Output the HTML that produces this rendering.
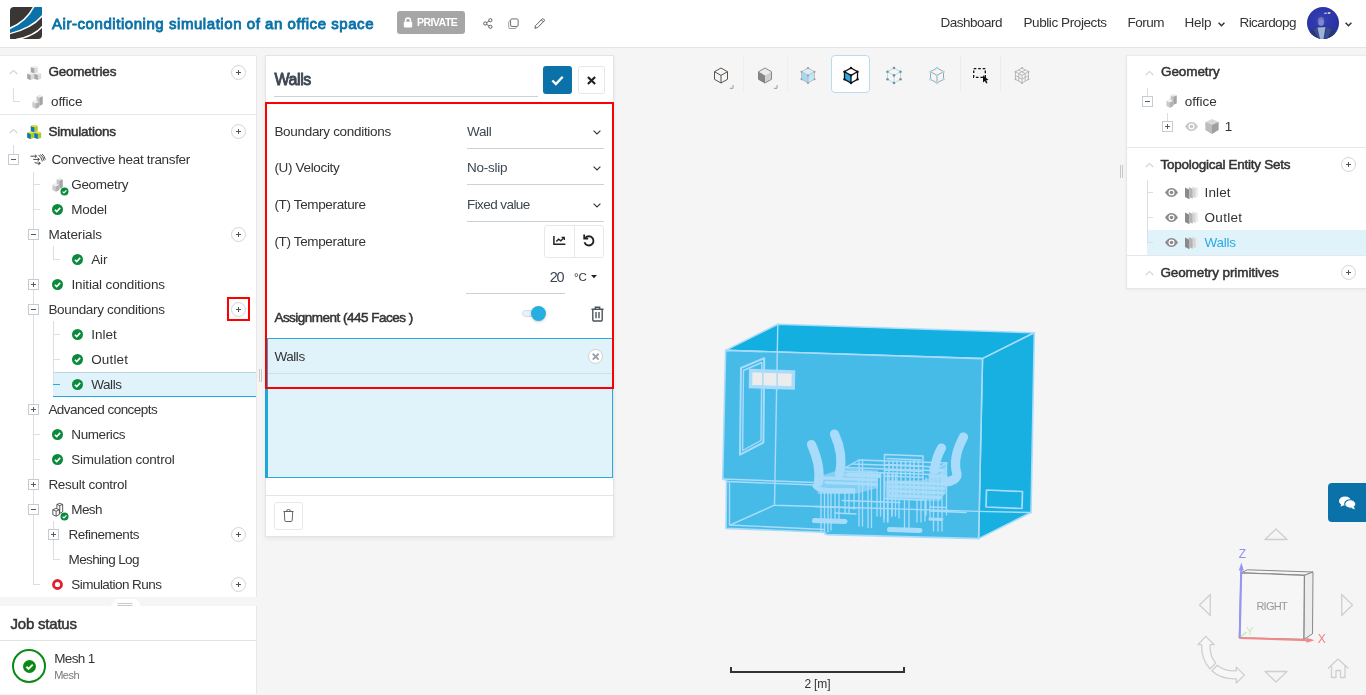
<!DOCTYPE html>
<html><head><meta charset="utf-8"><title>Air-conditioning simulation of an office space</title>
<style>
*{box-sizing:border-box;margin:0;padding:0}
html,body{width:1366px;height:695px;overflow:hidden;background:#f5f5f5;font-family:"Liberation Sans",sans-serif;color:#333;font-size:14px}
.a{position:absolute}
.t{position:absolute;white-space:nowrap;line-height:20px;height:20px}
.m{-webkit-text-stroke:0.5px currentColor}
.h{-webkit-text-stroke:0.85px currentColor}
.b{font-weight:bold}
svg{position:absolute;overflow:visible}
.pl{position:absolute;width:15px;height:15px;border:1px solid #cfd6dc;border-radius:50%;background:#fff}
.pl:before{content:"";position:absolute;left:4px;top:6px;width:5px;height:1px;background:#555}
.pl:after{content:"";position:absolute;left:6px;top:4px;width:1px;height:5px;background:#555}
.bx{position:absolute;width:11px;height:11px;border:1px solid #c3ccd4;background:#fff}
.bx:before{content:"";position:absolute;left:2px;top:4px;width:5px;height:1px;background:#5a5a5a}
.bx.p:after{content:"";position:absolute;left:4px;top:2px;width:1px;height:5px;background:#5a5a5a}
.ln{position:absolute;background:#d9dfe4}
.ck{position:absolute;width:11px;height:11px}
.sep{position:absolute;height:1px;background:#e3e8ec}
.ul{position:absolute;height:1px;background:#c9d2da}
</style></head><body>
<!-- ===== HEADER ===== -->
<div class="a" style="left:0;top:0;width:1366px;height:48px;background:#fff;border-bottom:1px solid #e4e4e4"></div>
<svg style="left:10px;top:7px" width="32" height="32" viewBox="0 0 32 32">
 <defs><clipPath id="lg"><path d="M4 0H31.300A.7.700 0 0 1 32 .7V28A4 4 0 0 1 28 32H.7A.7.700 0 0 1 0 31.300V4A4 4 0 0 1 4 0Z"/></clipPath></defs>
 <g clip-path="url(#lg)">
  <rect width="32" height="32" fill="#3a3634"/>
  <path d="M-1 20.600Q16 14 23.200 -1L33 -1L33 9Q22.500 22 -1 27.500Z" fill="#fff"/>
  <path d="M-1 22.600Q17 15.500 25 -1L33 -1L33 6.800Q22 20.500 -1 26.200Z" fill="#0a72a8"/>
  <path d="M6 32.600Q24 29.500 32.600 19.300" fill="none" stroke="#fff" stroke-width="1.500"/>
 </g>
</svg>
<div class="a" style="left:397px;top:11px;width:68px;height:23px;background:#a6a6a6;border-radius:3px"></div>
<svg style="left:403px;top:17px" width="10" height="11" viewBox="0 0 10 11"><path d="M2.6 5V3.4a2.4 2.4 0 0 1 4.8 0V5" fill="none" stroke="#fff" stroke-width="1.5"/><rect x="0.8" y="4.8" width="8.4" height="5.6" rx="0.8" fill="#fff"/></svg>
<!-- share -->
<svg style="left:482.800px;top:18.400px" width="10.200" height="11" viewBox="0 0 12 13" fill="none" stroke="#555" stroke-width="1.100"><circle cx="8.7" cy="2.6" r="1.9"/><circle cx="2.6" cy="6.5" r="1.9"/><circle cx="8.7" cy="10.4" r="1.9"/><path d="M4.3 5.5L7 3.6M4.3 7.5L7 9.4"/></svg>
<!-- copy -->
<svg style="left:508px;top:18.200px" width="11.200" height="11.600" viewBox="0 0 13 13" fill="none" stroke="#666" stroke-width="1.100"><rect x="3" y="0.8" width="8.8" height="8.8" rx="1.6" fill="#fff"/><path d="M2.6 3.2H2.2A1.4 1.4 0 0 0 .8 4.6v6a1.4 1.4 0 0 0 1.4 1.4h6a1.4 1.4 0 0 0 1.4-1.4v-.6" stroke="#999"/></svg>
<!-- pencil -->
<svg style="left:533.900px;top:18.200px" width="11.200" height="11.200" viewBox="0 0 13 13" fill="none" stroke="#555" stroke-width="1.100"><path d="M1 12l.9-3.2L9.6 1.1a1 1 0 0 1 1.4 0l.9.9a1 1 0 0 1 0 1.4L4.2 11.1Z"/><path d="M8.6 2.2l2.2 2.2"/></svg>
<!-- help chevron -->
<svg style="left:1217.500px;top:21.500px" width="7" height="5" viewBox="0 0 7 5" fill="none" stroke="#333" stroke-width="1.500"><path d="M.6.800l2.900 2.900L6.400.8"/></svg>
<svg style="left:1345px;top:21.500px" width="7" height="5" viewBox="0 0 7 5" fill="none" stroke="#333" stroke-width="1.500"><path d="M.6.800l2.900 2.900L6.400.8"/></svg>
<!-- avatar -->
<svg style="left:1307px;top:7px" width="32" height="32" viewBox="0 0 32 32">
 <defs><clipPath id="av"><circle cx="16" cy="16" r="16"/></clipPath>
 <radialGradient id="avg" cx="45%" cy="40%" r="70%"><stop offset="0" stop-color="#3541b8"/><stop offset="1" stop-color="#262d9a"/></radialGradient></defs>
 <g clip-path="url(#av)"><rect width="32" height="32" fill="url(#avg)"/>
 <path d="M1 32C2 24 6 21.500 11 19.500L19 19C25 21 29 24 31 32Z" fill="#2a3878"/>
 <path d="M10.500 20L15 32H12L6.500 23Z" fill="#3a4a94"/><path d="M19.500 19.500L17 32H20L24.500 22.500Z" fill="#3a4a94"/>
 <path d="M10.500 20.500L13 32H16.500L18.500 20Z" fill="#9db4d6"/>
 <ellipse cx="14" cy="12.500" rx="3.800" ry="4.200" fill="#3a3f9c"/>
 <ellipse cx="14" cy="14.500" rx="3.300" ry="4.600" fill="#6a73c4"/>
 <ellipse cx="14.200" cy="15.500" rx="2.300" ry="3" fill="#8088cf"/>
 <ellipse cx="22" cy="6" rx="1.500" ry="1" fill="#e8d9a0"/><ellipse cx="18.500" cy="6.300" rx="1.600" ry=".7" fill="#b9c2ee"/>
 </g>
</svg>
<!-- ===== LEFT TREE PANEL ===== -->
<div class="a" style="left:0;top:55px;width:257px;height:542px;background:#fff;border-top:1px solid #ececec;border-right:1px solid #e8e8e8"></div>
<div class="sep" style="left:0;top:114px;width:256px"></div>
<!-- selected row -->
<div class="a" style="left:53px;top:372px;width:203px;height:25px;background:#e1f3fa;border-top:1px solid #bcd6e6;border-bottom:1px solid #1ea9e0"></div>
<!-- tree lines -->
<div class="ln" style="left:13px;top:88px;width:1px;height:14px"></div><div class="ln" style="left:13px;top:101px;width:7px;height:1px"></div>
<div class="ln" style="left:13px;top:145px;width:1px;height:9px"></div>
<div class="ln" style="left:33px;top:172px;width:1px;height:413px"></div>
<div class="ln" style="left:33px;top:184px;width:7px;height:1px"></div>
<div class="ln" style="left:33px;top:209px;width:7px;height:1px"></div>
<div class="ln" style="left:53px;top:246px;width:1px;height:14px"></div><div class="ln" style="left:53px;top:259px;width:7px;height:1px"></div>
<div class="ln" style="left:53px;top:321px;width:1px;height:64px"></div>
<div class="ln" style="left:53px;top:334px;width:7px;height:1px"></div>
<div class="ln" style="left:53px;top:359px;width:7px;height:1px"></div>
<div class="ln" style="left:53px;top:384px;width:7px;height:1px;background:#29abe2"></div>
<div class="ln" style="left:33px;top:434px;width:7px;height:1px"></div>
<div class="ln" style="left:33px;top:459px;width:7px;height:1px"></div>
<div class="ln" style="left:53px;top:521px;width:1px;height:39px"></div><div class="ln" style="left:53px;top:559px;width:7px;height:1px"></div>
<div class="ln" style="left:33px;top:584px;width:7px;height:1px"></div>
<!-- collapse chevrons -->
<svg style="left:9px;top:69px" width="9" height="6" viewBox="0 0 9 6" fill="none" stroke="#cdd3d9" stroke-width="1.1"><path d="M.8 5l3.7-3.6L8.2 5"/></svg>
<svg style="left:9px;top:128px" width="9" height="6" viewBox="0 0 9 6" fill="none" stroke="#cdd3d9" stroke-width="1.1"><path d="M.8 5l3.7-3.6L8.2 5"/></svg>
<!-- plus circles -->
<div class="pl" style="left:231px;top:64.5px"></div>
<div class="pl" style="left:231px;top:123.5px"></div>
<div class="pl" style="left:231px;top:226.5px"></div>
<div class="pl" style="left:231px;top:301.5px"></div>
<div class="pl" style="left:231px;top:526.5px"></div>
<div class="pl" style="left:231px;top:576.5px"></div>
<div class="a" style="left:227px;top:297px;width:23px;height:24px;border:2px solid #f00"></div>
<!-- expand boxes -->
<div class="bx" style="left:8px;top:154px"></div>
<div class="bx" style="left:28px;top:229px"></div>
<div class="bx p" style="left:28px;top:279px"></div>
<div class="bx" style="left:28px;top:304px"></div>
<div class="bx p" style="left:28px;top:404px"></div>
<div class="bx p" style="left:28px;top:479px"></div>
<div class="bx" style="left:28px;top:504px"></div>
<div class="bx p" style="left:48px;top:529px"></div>
<!-- icon defs -->
<svg width="0" height="0"><defs>
 <g id="ck"><circle cx="5.5" cy="5.5" r="5.5" fill="#0b8a3c"/><path d="M2.9 5.7l1.8 1.8 3.5-3.6" fill="none" stroke="#fff" stroke-width="1.6"/></g>
 <g id="blk"><path d="M4.600 1.500L7.600.3l3 1.200v7.800l-3 1.500-3-1.200Z" fill="#c4c4c4"/><path d="M4.600 1.500L7.600.3l3 1.200-3 1.200Z" fill="#ececec"/><path d="M7.600 2.700l3-1.200v7.800l-3 1.500Z" fill="#a4a4a4"/><path d="M.4 6.900l3.200-1.300 3.600 1.400v4.900l-3.400 1.800-3.400-1.600Z" fill="#cbcbcb"/><path d="M.4 6.900l3.200-1.300 3.600 1.400-3.400 1.500Z" fill="#f0f0f0"/><path d="M3.800 8.500l3.400-1.500v4.900l-3.400 1.800Z" fill="#b2b2b2"/></g>
</defs></svg>
<!-- Geometries icon: 3 gray cubes -->
<svg style="left:27.2px;top:65.800px" width="15" height="15" viewBox="0 0 15 15"><path d="M7.27 0.00l3.45 1.1v5.1l-3.45 1.1l-3.45 -1.1v-5.1Z" fill="#dadada"/><path d="M7.27 2.20v5.1l-3.45 -1.1v-5.1Z" fill="#a6a6a6"/><path d="M7.27 0.00l3.45 1.1l-3.45 1.1l-3.45 -1.1Z" fill="#f0f0f0"/><path d="M3.7 6.60l3.45 1.1v5.1l-3.45 1.1l-3.45 -1.1v-5.1Z" fill="#dadada"/><path d="M3.7 8.80v5.1l-3.45 -1.1v-5.1Z" fill="#a6a6a6"/><path d="M3.7 6.60l3.45 1.1l-3.45 1.1l-3.45 -1.1Z" fill="#f0f0f0"/><path d="M10.75 6.60l3.45 1.1v5.1l-3.45 1.1l-3.45 -1.1v-5.1Z" fill="#dadada"/><path d="M10.75 8.80v5.1l-3.45 -1.1v-5.1Z" fill="#a6a6a6"/><path d="M10.75 6.60l3.45 1.1l-3.45 1.1l-3.45 -1.1Z" fill="#f0f0f0"/></svg>
<!-- office icon -->
<svg style="left:31.700px;top:94.500px" width="11" height="14" viewBox="0 0 11 14"><use href="#blk"/></svg>
<!-- Simulations icon: coloured cubes -->
<svg style="left:27.2px;top:124.800px" width="15" height="15" viewBox="0 0 15 15"><path d="M7.27 0.00l3.45 1.1v5.1l-3.45 1.1l-3.45 -1.1v-5.1Z" fill="#a9c93a"/><path d="M7.27 2.20v5.1l-3.45 -1.1v-5.1Z" fill="#0b79b9"/><path d="M7.27 0.00l3.45 1.1l-3.45 1.1l-3.45 -1.1Z" fill="#efe023"/><path d="M3.7 6.60l3.45 1.1v5.1l-3.45 1.1l-3.45 -1.1v-5.1Z" fill="#a9c93a"/><path d="M3.7 8.80v5.1l-3.45 -1.1v-5.1Z" fill="#0b79b9"/><path d="M3.7 6.60l3.45 1.1l-3.45 1.1l-3.45 -1.1Z" fill="#efe023"/><path d="M10.75 6.60l3.45 1.1v5.1l-3.45 1.1l-3.45 -1.1v-5.1Z" fill="#a9c93a"/><path d="M10.75 8.80v5.1l-3.45 -1.1v-5.1Z" fill="#0b79b9"/><path d="M10.75 6.60l3.45 1.1l-3.45 1.1l-3.45 -1.1Z" fill="#efe023"/></svg>
<!-- convective icon -->
<svg style="left:29.800px;top:153.900px" width="16" height="12" viewBox="0 0 16 12" fill="none" stroke="#4a4a4a" stroke-width="1"><path d="M.5 2.200h6M4.900.7l1.800 1.500-1.800 1.500"/><path d="M3.200 5.400h6M7.600 3.900l1.800 1.500-1.800 1.500"/><path d="M4.600 8.700l5.600.8M8.600 7.700l1.700 1.800-2 1.200"/><path d="M8.600.9q3 2.600 3.800 6.500M10.400.4q3 2.600 3.700 6.300M12.200 0q2.500 2.400 3.100 5.600"/></svg>
<!-- Geometry (sim) icon -->
<svg style="left:52px;top:177.800px" width="11" height="14" viewBox="0 0 11 14"><use href="#blk"/></svg>
<svg style="left:60px;top:187px" width="9" height="9" viewBox="-0.700 -0.700 12.400 12.400"><circle cx="5.5" cy="5.5" r="6.200" fill="#fff"/><use href="#ck"/></svg>
<!-- checks -->
<svg class="ck" style="left:52px;top:204px" viewBox="0 0 11 11"><use href="#ck"/></svg>
<svg class="ck" style="left:72px;top:254px" viewBox="0 0 11 11"><use href="#ck"/></svg>
<svg class="ck" style="left:52px;top:279px" viewBox="0 0 11 11"><use href="#ck"/></svg>
<svg class="ck" style="left:72px;top:329px" viewBox="0 0 11 11"><use href="#ck"/></svg>
<svg class="ck" style="left:72px;top:354px" viewBox="0 0 11 11"><use href="#ck"/></svg>
<svg class="ck" style="left:72px;top:379px" viewBox="0 0 11 11"><use href="#ck"/></svg>
<svg class="ck" style="left:52px;top:429px" viewBox="0 0 11 11"><use href="#ck"/></svg>
<svg class="ck" style="left:52px;top:454px" viewBox="0 0 11 11"><use href="#ck"/></svg>
<!-- mesh icon -->
<svg style="left:51.800px;top:503.400px" width="11.500" height="13" viewBox="0 0 11 13.500" fill="none" stroke="#444" stroke-width="0.9" stroke-linejoin="round"><path d="M4.600 1.500L7.600.3l3 1.200v7.800l-3 1.500V2.700l-3-1.200v4.300M7.600 2.700l3-1.200"/><path d="M.4 6.900l3.200-1.300 3.600 1.400v4.900l-3.400 1.800-3.400-1.600ZM.4 6.900l3.400 1.600 3.400-1.500M3.800 8.500v5.200"/></svg>
<svg style="left:60px;top:512px" width="9" height="9" viewBox="-0.700 -0.700 12.400 12.400"><circle cx="5.5" cy="5.5" r="6.200" fill="#fff"/><use href="#ck"/></svg>
<!-- red ring -->
<svg style="left:52px;top:579px" width="11" height="11" viewBox="0 0 11 11"><circle cx="5.5" cy="5.5" r="4" fill="none" stroke="#e0202e" stroke-width="2.800"/></svg>
<!-- handle -->
<svg style="left:109.500px;top:597.500px" width="32" height="9" viewBox="0 0 32 9"><path d="M0 9L5.500 1h21l5.500 8Z" fill="#fff"/><path d="M7.500 5.500h15M7.500 7.500h15" stroke="#bbb" stroke-width="0.8"/></svg>
<!-- ===== JOB STATUS ===== -->
<div class="a" style="left:0;top:606px;width:257px;height:88px;background:#fff;border-right:1px solid #e8e8e8"></div>
<div class="sep" style="left:0;top:640px;width:256px;background:#e2e2e2"></div>
<div class="a" style="left:12px;top:649px;width:34px;height:34px;border:2px solid #0a8a14;border-radius:50%"></div>
<svg style="left:22.500px;top:659.500px" width="13" height="13" viewBox="0 0 11 11"><circle cx="5.500" cy="5.500" r="5.500" fill="#0a8a14"/><path d="M2.900 5.700l1.800 1.800 3.500-3.600" fill="none" stroke="#fff" stroke-width="1.600"/></svg>

<!-- ===== CENTER SETTINGS PANEL ===== -->
<div class="a" style="left:265px;top:55px;width:349px;height:482px;background:#fff;border:1px solid #e4e4e4;box-shadow:0 2px 4px rgba(0,0,0,.06)"></div>
<div class="ul" style="left:274px;top:96px;width:264px"></div>
<!-- confirm / cancel -->
<div class="a" style="left:543px;top:66px;width:29px;height:28px;background:#0a72a8;border-radius:3px"></div>
<svg style="left:551px;top:75px" width="13" height="11" viewBox="0 0 13 11" fill="none" stroke="#fff" stroke-width="2.4"><path d="M1.300 5.500l3.600 3.500L11.700 1.800"/></svg>
<div class="a" style="left:577.500px;top:66px;width:27.500px;height:28px;background:#fff;border:1px solid #e3e7eb;border-radius:3px"></div>
<svg style="left:586.500px;top:75.500px" width="9" height="9" viewBox="0 0 8 8" fill="none" stroke="#222" stroke-width="1.900"><path d="M.8.8l6.400 6.400M7.200.8L.8 7.200"/></svg>
<!-- selects -->
<div class="ul" style="left:467px;top:148px;width:137px"></div>
<div class="ul" style="left:467px;top:184px;width:137px"></div>
<div class="ul" style="left:467px;top:221px;width:137px"></div>
<svg style="left:592.500px;top:129.500px" width="8" height="5" viewBox="0 0 8 5" fill="none" stroke="#333" stroke-width="1.100"><path d="M.6.600l3.400 3.400L7.400.6"/></svg>
<svg style="left:592.500px;top:165.500px" width="8" height="5" viewBox="0 0 8 5" fill="none" stroke="#333" stroke-width="1.100"><path d="M.6.600l3.400 3.400L7.400.6"/></svg>
<svg style="left:592.500px;top:202.500px" width="8" height="5" viewBox="0 0 8 5" fill="none" stroke="#333" stroke-width="1.100"><path d="M.6.600l3.400 3.400L7.400.6"/></svg>
<!-- button group -->
<div class="a" style="left:544px;top:225px;width:60px;height:33px;background:#fff;border:1px solid #e6e9ec;border-radius:3px"></div>
<div class="a" style="left:574px;top:225px;width:1px;height:33px;background:#e6e9ec"></div>
<svg style="left:553px;top:236px" width="13" height="9" viewBox="0 0 13 9" fill="none" stroke="#222" stroke-width="1.500"><path d="M.9 0v8.200h11.500"/><path d="M3.300 5.600l2.300-2.400 2.200 1.700L10.500 2" stroke-width="1.400"/><path d="M8.600 1.300h2.700v2.700" stroke-width="1.300"/></svg>
<svg style="left:583px;top:233.500px" width="12" height="13" viewBox="0 0 12 13" fill="none" stroke="#222" stroke-width="1.900"><path d="M2.300 4A4.600 4.600 0 1 1 1.500 8.300"/><path d="M1.200.6v4h4" stroke-width="1.800"/></svg>
<!-- value -->
<div class="ul" style="left:466px;top:293px;width:99px"></div>
<svg style="left:590.500px;top:275px" width="6" height="3.200" viewBox="0 0 6 3.200"><path d="M0 0h6L3 3.200Z" fill="#222"/></svg>
<!-- toggle -->
<div class="a" style="left:522px;top:310px;width:18px;height:7px;background:#e3f3fa;border:1px solid #d4dde3;border-radius:4px"></div>
<div class="a" style="left:531px;top:306px;width:15px;height:15px;background:#27aee0;border-radius:50%;box-shadow:0 1px 3px rgba(0,0,0,.2)"></div>
<!-- trash -->
<svg style="left:591px;top:305.500px" width="13" height="16" viewBox="0 0 13 16" fill="none" stroke="#4a545e" stroke-width="1.400"><path d="M.5 3.200h12M4.300 3V1.200h4.400V3M1.800 3.200v10.600a1.200 1.200 0 0 0 1.200 1.200h7a1.200 1.200 0 0 0 1.200-1.200V3.200M5 6v6.200M8 6v6.200"/></svg>
<!-- assignment list -->
<div class="a" style="left:265px;top:338px;width:348px;height:140px;background:#e0f3fa;border:1px solid #29abe2;border-left:3px solid #1ea7df"></div>
<div class="a" style="left:268px;top:373px;width:344px;height:1px;background:#d6dce0"></div>
<div class="a" style="left:588px;top:349px;width:15px;height:15px;background:#fff;border:1px solid #cfcfcf;border-radius:50%"></div>
<svg style="left:591.800px;top:352.800px" width="7.400" height="7.400" viewBox="0 0 7 7" fill="none" stroke="#98a3ad" stroke-width="1.800"><path d="M.7.700l5.600 5.600M6.300.7L.7 6.300"/></svg>
<!-- footer -->
<div class="a" style="left:266px;top:495px;width:347px;height:1px;background:#e4e4e4"></div>
<div class="a" style="left:274px;top:502px;width:29px;height:28px;background:#fff;border:1px solid #e6e9ec;border-radius:3px"></div>
<svg style="left:283px;top:509px" width="11" height="13" viewBox="0 0 11 13" fill="none" stroke="#555" stroke-width="0.900"><path d="M.5 2.500h10M3.500 2.300a2 1.800 0 0 1 4 0M1.300 2.500l.5 8.800a1.200 1.200 0 0 0 1.200 1.200h5a1.200 1.200 0 0 0 1.200-1.200l.5-8.800"/></svg>
<!-- red highlight -->
<div class="a" style="left:265px;top:102px;width:349px;height:286.500px;border:2.300px solid #f00"></div>
<!-- resize handles -->
<div class="a" style="left:259px;top:369px;width:3px;height:13px;border-left:1px solid #c8c8c8;border-right:1px solid #c8c8c8"></div>
<div class="a" style="left:1120px;top:165px;width:3px;height:13px;border-left:1px solid #c8c8c8;border-right:1px solid #c8c8c8"></div>

<!-- ===== VIEWER TOOLBAR ===== -->
<div class="a" style="left:831px;top:55px;width:39px;height:38px;background:#fff;border:1px solid #b9dcec;border-radius:4px"></div>
<div class="a" style="left:743px;top:56px;width:1px;height:36px;background:#efefef"></div>
<div class="a" style="left:787px;top:56px;width:1px;height:36px;background:#efefef"></div>
<div class="a" style="left:960px;top:56px;width:1px;height:36px;background:#ececec"></div>
<div class="a" style="left:1000px;top:56px;width:1px;height:36px;background:#ececec"></div>
<!-- cube geometry: center (8,9) top (8,1) ; hex -->
<svg style="left:712.500px;top:66.600px" width="22" height="22" viewBox="0 0 22 22" fill="none" stroke="#4a4038" stroke-width="0.900"><path d="M8 1l6.500 3.700v7.600L8 16l-6.500-3.700V4.700Z M8 8.400v7.600M8 8.400L1.500 4.700M8 8.400l6.500-3.700"/><path d="M16.800 21.300h3.200v-3.200" stroke="#999" stroke-width="1"/></svg>
<svg style="left:756.500px;top:66.600px" width="22" height="22" viewBox="0 0 22 22"><path d="M8 1l6.500 3.700L8 8.400 1.500 4.700Z" fill="#ebebeb"/><path d="M8 8.400l6.500-3.700v7.600L8 16Z" fill="#cdcfd1"/><path d="M8 8.400L1.500 4.700v7.600L8 16Z" fill="#858585"/><path d="M8 1l6.500 3.700v7.600L8 16l-6.500-3.700V4.700Z" fill="none" stroke="#707070" stroke-width=".8"/><path d="M16.800 21.300h3.200v-3.200" stroke="#999" stroke-width="1" fill="none"/></svg>
<svg style="left:800px;top:66.600px" width="16" height="18" viewBox="0 0 16 18"><path d="M8 1l6.500 3.700L8 8.400 1.500 4.700Z" fill="#d6eef8"/><path d="M8 8.400l6.500-3.700v7.600L8 16Z" fill="#bfe6f5"/><path d="M8 8.400L1.500 4.700v7.600L8 16Z" fill="#a3daf0"/><path d="M8 1l6.500 3.700v7.600L8 16l-6.500-3.700V4.700Z M8 8.400v7.600M8 8.400L1.500 4.700M8 8.400l6.500-3.700" fill="none" stroke="#b5b5b5" stroke-width=".8"/><g fill="#999"><circle cx="8" cy="1" r="1"/><circle cx="14.500" cy="4.700" r="1"/><circle cx="14.500" cy="12.300" r="1"/><circle cx="8" cy="16" r="1"/><circle cx="1.500" cy="12.300" r="1"/><circle cx="1.500" cy="4.700" r="1"/><circle cx="8" cy="8.400" r="1"/></g></svg>
<svg style="left:843px;top:66.600px" width="16" height="18" viewBox="0 0 16 18"><path d="M8 8.400L1.500 4.700v7.600L8 16Z" fill="#29abe2"/><path d="M8 1l6.500 3.700v7.600L8 16l-6.500-3.700V4.700Z M8 8.400v7.600M8 8.400L1.500 4.700M8 8.400l6.500-3.700" fill="none" stroke="#111" stroke-width="1.300"/><g fill="#111"><circle cx="8" cy="1" r="1.200"/><circle cx="14.500" cy="4.700" r="1.200"/><circle cx="14.500" cy="12.300" r="1.200"/><circle cx="8" cy="16" r="1.200"/><circle cx="1.500" cy="12.300" r="1.200"/><circle cx="1.500" cy="4.700" r="1.200"/><circle cx="8" cy="8.400" r="1.200"/></g></svg>
<svg style="left:886px;top:66.600px" width="16" height="18" viewBox="0 0 16 18"><path d="M8 1l6.500 3.700v7.600L8 16l-6.500-3.700V4.700Z M8 8.400v7.600M8 8.400L1.500 4.700M8 8.400l6.500-3.700" fill="none" stroke="#9fdcf5" stroke-width=".9"/><g fill="#8c8c8c"><circle cx="8" cy="1" r="1.300"/><circle cx="14.500" cy="4.700" r="1.300"/><circle cx="14.500" cy="12.300" r="1.300"/><circle cx="8" cy="16" r="1.300"/><circle cx="1.500" cy="12.300" r="1.300"/><circle cx="1.500" cy="4.700" r="1.300"/><circle cx="8" cy="8.400" r="1.300"/></g></svg>
<svg style="left:929px;top:66.600px" width="16" height="18" viewBox="0 0 16 18"><path d="M8 1l6.500 3.700v7.600L8 16l-6.500-3.700V4.700Z M8 8.400v7.600M8 8.400L1.500 4.700M8 8.400l6.500-3.700" fill="none" stroke="#9a9a9a" stroke-width=".9"/><g fill="#9fdcf5"><circle cx="8" cy="1" r="1.300"/><circle cx="14.500" cy="4.700" r="1.300"/><circle cx="14.500" cy="12.300" r="1.300"/><circle cx="8" cy="16" r="1.300"/><circle cx="1.500" cy="12.300" r="1.300"/><circle cx="1.500" cy="4.700" r="1.300"/><circle cx="8" cy="8.400" r="1.300"/></g></svg>
<svg style="left:973px;top:68px" width="16" height="16" viewBox="0 0 16 16"><rect x=".7" y=".7" width="11.600" height="8.600" fill="none" stroke="#111" stroke-width="1.300" stroke-dasharray="2.600 1.900"/><path d="M10 7.200v7.300l1.900-1.600 1.300 2.700 1.300-.7-1.300-2.600 2.400-.2Z" fill="#111"/></svg>
<svg style="left:1014px;top:66.600px" width="16" height="18" viewBox="0 0 16 18" fill="none" stroke="#b2b2b2" stroke-width=".9"><path d="M8 1l6.500 3.700v7.600L8 16l-6.500-3.700V4.700Z M8 8.400v7.600M8 8.400L1.500 4.700M8 8.400l6.500-3.700M4.700 2.900l6.500 3.700v7.600M11.300 2.900L4.800 6.600v7.600M1.500 8.500L8 12.200l6.500-3.700"/><g fill="#b4b4b4" stroke="none"><circle cx="8" cy="1" r="1"/><circle cx="14.500" cy="4.700" r="1"/><circle cx="14.500" cy="12.300" r="1"/><circle cx="8" cy="16" r="1"/><circle cx="1.500" cy="12.300" r="1"/><circle cx="1.500" cy="4.700" r="1"/></g></svg>
<!-- ===== 3D MODEL ===== -->
<svg style="left:0;top:0" width="1366" height="695" viewBox="0 0 1366 695">
 <g stroke="#a9dcfa" stroke-width="1.600" stroke-linejoin="round">
  <!-- top face -->
  <path d="M777.800 324.200L1034.300 332.800L982.500 358.600L725.600 350.400Z" fill="#12afe0"/>
  <!-- right face -->
  <path d="M1034.300 332.800L1031 512.500L978.600 538.600L982.500 358.600Z" fill="#17b0e1"/>
  <!-- front face -->
  <path d="M725.600 350.400L982.500 358.600L978.600 538.600L826.500 534.600L824 532.200L726 528.400L726.500 480.500L722.700 479Z" fill="#47bbe8"/>
 </g>
 <g fill="none" stroke="#a9dcfa" stroke-width="1.400" stroke-linejoin="round" stroke-linecap="round">
  <!-- back-left vertical + floor -->
  <path d="M777.800 324.200L774.500 505.200L730.500 524.800M774.500 505.200L978.500 511.400L1031 512.500"/>
  <path d="M722.700 479L815 482.500M726.500 481.500L815 485M729.500 483V525L824 529.500"/>
  <!-- door -->
  <path d="M741 368L764.200 358.200L763.400 442.500L740 454.700Z" stroke-width="2"/><path d="M743.500 370.500L761.800 362.500L761 440.500L742.600 450.500Z" stroke-width="1.400"/>
  <!-- outlet -->
  <path d="M986.500 490L1022.500 491.500L1022 508.500L986 507Z" stroke-width="1.700"/>
 </g>
 <!-- window -->
 <path d="M750.700 370.500L793.500 372L793.200 387.900L750.500 386.500Z" fill="#ececec" stroke="#a9dcfa" stroke-width="3.500"/>
 <path d="M762.800 370V388M777.200 370.500V388.500" stroke="#a9dcfa" stroke-width="1.600"/>
 <!-- furniture -->
 <g fill="#a9dcfa" fill-opacity=".62">
  <path d="M822 475.500L845 468L878 470.500L878 488L855 494L818 494L816 486Z"/>
  <path d="M885 481L924 480L946 471L947 490L940 501L886 500Z"/>
  <path d="M929 466L946 464L946 480L929 483Z"/>
 </g>
 <g fill="none" stroke="#a9dcfa" stroke-linecap="round" stroke-linejoin="round">
  <g stroke-width="9.200">
   <path d="M811.500 444.500C817.500 458 820.500 470 818.500 482"/>
   <path d="M834.500 434C841 448 842.500 461 839.500 474"/>
   <path d="M963.500 437C956.500 450 953.500 463 957 474C957.500 479 951 481.500 945.500 482"/>
   <path d="M941.500 448C937.500 455 935.500 461 934.500 470"/>
  </g>
  <g stroke-width="5">
   <path d="M815 486C818 491 830 491 853 490.500"/>
   <path d="M814.500 520.500L845 521.500"/><path d="M889.500 529.500L920 530.500"/>
  </g>
  <g stroke-width="3">
   <path d="M824 478L876 480M826 482.500L876 484.500M846 475L880 476.500"/>
   <path d="M890 482L944 484M890 486.500L944 488.500M890 491L944 493M890 495.500L940 497.500"/>
   <path d="M932 470L944 470.500M930 476L946 476.500"/>
   <path d="M930 519L942 519.500"/>
  </g>
  <g stroke-width="1.300">
   <!-- table -->
   <path d="M845.500 467.500L859 460L947 463L946 468.500L931 475M845.500 467.500L931 470.500L947 463M845.500 471.500L931 474.500M852 464L939 467M848 473.500L880 474.500"/>
   <path d="M859 460V526M862.500 460V526M868 472V527.500M871.500 472V527.500M877 473V516M880.500 473V516M884 473V522M887.500 473V522M892 473V516M895.500 473V516"/>
   <!-- centre chair back -->
   <path d="M884.500 454.500L923 456V500L884.500 498.500ZM887 458.500L921 460M889 461V497M893 461V497M897 461V497M901 461V497M905.500 461V497M910 461V497M914 461V497M918.500 461V497M885 464.500L923 466M885 470L923 471.500M885 476L923 477.500" stroke-width="1.500"/>
   <path d="M884 500V518M888 500V522M892 500V516M899 500V518M904.500 500V528M909 500V528M917 500V522M921 500V522M926 478V515M930 478V520M933.500 478V531M938 478V531M942 472V531M946.500 467V515M925 500V521"/>
   <!-- left chair legs -->
   <path d="M821 491V532.500M824.500 491V534M828 491V532M831 491V530M835 491V521M839 491V521M845 491V513M849 491V513M854 491V509"/>
   <path d="M815 506.500L856 508M842 500.500L900 502.500M930 511L966 512.500M835 513L856 514M930 507L946 507.500"/>
  </g>
 </g>
</svg>
<!-- ===== SCALE BAR ===== -->
<div class="a" style="left:730px;top:667px;width:175px;height:6px;border:2px solid #333;border-top:none"></div>
<!-- ===== NAV CUBE ===== -->
<svg style="left:0;top:0" width="1366" height="695" viewBox="0 0 1366 695" fill="none">
 <g stroke="#cfcfcf" stroke-width="1.300" stroke-linejoin="round">
  <path d="M1276 529L1287 539.500H1265Z"/>
  <path d="M1276 682L1287 671.500H1265Z"/>
  <path d="M1199.500 605L1210.300 594.500V615.500Z"/>
  <path d="M1352.500 605L1341.700 594.500V615.500Z"/>
  <path d="M1328 668.500L1338 659L1348.500 668.500M1331.500 666V677.500H1336V670.500H1340.500V677.500H1345V666"/>
  <path d="M1205.700 636.400L1214.300 644.700L1210.100 644.700Q1209.500 656 1215.700 662.900L1210.100 669Q1201 659 1201.700 644.700L1198 644.700Z" fill="#f7f7f7"/>
  <path d="M1244.300 675.100L1236.300 667.100L1236.300 670.900Q1225 671.500 1217.100 665.200L1212 670.900Q1222 679.500 1236.300 678.800L1236.300 683Z" fill="#f7f7f7"/>
 </g>
 <path d="M1241 572.800L1247.500 569.800L1313 572L1304.400 575.300Z" fill="#f4f4f4" stroke="#888" stroke-width="1"/>
 <path d="M1304.400 575.300L1313 572L1312.500 633.800L1303.800 639.400Z" fill="#ededed" stroke="#888" stroke-width="1"/>
 <path d="M1241 572.800L1304.400 575.300L1303.800 639.400L1239.400 637.800Z" fill="#f6f6f6" stroke="#888" stroke-width="1.200"/>
 <path d="M1239.700 638L1246.500 632" stroke="#bfe8bf" stroke-width="1.500"/>
 <path d="M1239.700 638L1241.300 567" stroke="#9595f2" stroke-width="2.100"/><path d="M1241.400 562.500L1243.800 570.500H1238.800Z" fill="#9595f2"/>
 <path d="M1239.700 638L1309 640.200" stroke="#f28888" stroke-width="1.900"/><path d="M1314.500 640.300L1306.500 642.700V637.700Z" fill="#f28888"/>
</svg>

<!-- ===== RIGHT PANEL ===== -->
<div class="a" style="left:1126px;top:55px;width:240px;height:234px;background:#fff;border-top:1px solid #ececec;border-left:1px solid #e6e6e6;border-bottom:1px solid #e6e6e6;box-shadow:0 1px 3px rgba(0,0,0,.05)"></div>
<div class="a" style="left:1147px;top:230px;width:219px;height:25px;background:#e1f3fa"></div>
<div class="sep" style="left:1127px;top:147px;width:239px"></div>
<div class="sep" style="left:1127px;top:255px;width:239px"></div>
<!-- chevrons -->
<svg style="left:1145px;top:70px" width="9" height="6" viewBox="0 0 9 6" fill="none" stroke="#cdd3d9" stroke-width="1.100"><path d="M.8 5l3.700-3.600L8.200 5"/></svg>
<svg style="left:1145px;top:162px" width="9" height="6" viewBox="0 0 9 6" fill="none" stroke="#cdd3d9" stroke-width="1.100"><path d="M.8 5l3.700-3.600L8.200 5"/></svg>
<svg style="left:1145px;top:270px" width="9" height="6" viewBox="0 0 9 6" fill="none" stroke="#cdd3d9" stroke-width="1.100"><path d="M.8 5l3.700-3.600L8.200 5"/></svg>
<!-- tree lines -->
<div class="ln" style="left:1147px;top:88px;width:1px;height:8px"></div>
<div class="ln" style="left:1167px;top:113px;width:1px;height:8px"></div>
<div class="ln" style="left:1147px;top:180px;width:1px;height:63px"></div>
<div class="ln" style="left:1147px;top:192px;width:6px;height:1px"></div>
<div class="ln" style="left:1147px;top:217px;width:6px;height:1px"></div>
<div class="ln" style="left:1147px;top:242px;width:6px;height:1px"></div>
<div class="bx" style="left:1142px;top:96px"></div>
<div class="bx p" style="left:1162px;top:121px"></div>
<div class="pl" style="left:1340.500px;top:156.500px"></div>
<div class="pl" style="left:1340.500px;top:264.500px"></div>
<svg style="left:1166.200px;top:94.300px" width="11" height="14" viewBox="0 0 11 14"><use href="#blk"/></svg>
<svg width="0" height="0"><defs>
 <g id="eye"><path d="M0 4.500C2 1.200 4.200 0 6.500 0S11 1.200 13 4.500C11 7.800 8.800 9 6.500 9S2 7.800 0 4.500Z"/><circle cx="6.500" cy="4.500" r="3" fill="#fff"/><circle cx="6.500" cy="4.500" r="1.800"/></g>
 <g id="fcs"><path d="M0 1.500l4.500 2.200v9.500L0 11Z" fill="#8a8a8a"/><path d="M3.800 1l4 2v9.800l-3.300-1.600V3.700L3.800 3.300Z" fill="#b4b4b4"/><path d="M7 .6l3.800 1.900v9.700l-3-1.500V3Z" fill="#d6d6d6"/><path d="M10.200.4l2.800 1.400v9.500l-2.200-1.100V2.500Z" fill="#ececec"/></g>
</defs></svg>
<svg style="left:1184.500px;top:122px" width="13" height="9" viewBox="0 0 13 9" fill="#c8c8c8"><use href="#eye"/></svg>
<svg style="left:1204.500px;top:119px" width="14" height="15" viewBox="0 0 15 16"><path d="M7.500 0l7 3.200v8.600l-7 4.200-7-4.200V3.200Z" fill="#d8d8d8"/><path d="M7.500 6.500l7-3.300v8.600l-7 4.200Z" fill="#a0a0a0"/><path d="M7.500 6.500L.5 3.200v8.600l7 4.200Z" fill="#bcbcbc"/></svg>
<svg style="left:1164.500px;top:188px" width="13" height="9" viewBox="0 0 13 9" fill="#8c8c8c"><use href="#eye"/></svg>
<svg style="left:1164.500px;top:213px" width="13" height="9" viewBox="0 0 13 9" fill="#8c8c8c"><use href="#eye"/></svg>
<svg style="left:1164.500px;top:238px" width="13" height="9" viewBox="0 0 13 9" fill="#8c8c8c"><use href="#eye"/></svg>
<svg style="left:1185px;top:185.500px" width="13" height="14" viewBox="0 0 13 14"><use href="#fcs"/></svg>
<svg style="left:1185px;top:210.500px" width="13" height="14" viewBox="0 0 13 14"><use href="#fcs"/></svg>
<svg style="left:1185px;top:235.500px" width="13" height="14" viewBox="0 0 13 14"><use href="#fcs"/></svg>
<!-- chat -->
<div class="a" style="left:1328px;top:483px;width:38px;height:39px;background:#0a72a8;border-radius:4px 0 0 4px"></div>
<svg style="left:1339px;top:496px" width="17" height="14" viewBox="0 0 17 14"><ellipse cx="6" cy="5" rx="6" ry="4.600" fill="#fff"/><path d="M1.500 10.800l1-3.500 3 1.500Z" fill="#fff"/><ellipse cx="11.300" cy="8" rx="5.600" ry="4.300" fill="#fff" stroke="#0a72a8" stroke-width="1.100"/><path d="M15.800 13.500l-1-3.300-2.800 1.500Z" fill="#fff"/></svg>

<div id="txt" style="position:absolute;left:0;top:0;width:1366px;height:695px;will-change:transform">
<span class="t h" style="left:52.0px;top:14.2px;font-size:15px;color:#0a72a8;letter-spacing:0.554px">Air-conditioning simulation of an office space</span>
<span class="t b" style="left:416.9px;top:12.0px;font-size:10.5px;color:#ffffff;letter-spacing:-0.509px">PRIVATE</span>
<span class="t" style="left:940.5px;top:13.4px;font-size:13.5px;color:#333;letter-spacing:-0.506px">Dashboard</span>
<span class="t" style="left:1023.5px;top:13.4px;font-size:13.5px;color:#333;letter-spacing:-0.414px">Public Projects</span>
<span class="t" style="left:1127.5px;top:13.4px;font-size:13.5px;color:#333;letter-spacing:-0.504px">Forum</span>
<span class="t" style="left:1184.5px;top:13.4px;font-size:13.5px;color:#333;letter-spacing:-0.255px">Help</span>
<span class="t" style="left:1239.5px;top:13.4px;font-size:13.5px;color:#333;letter-spacing:-0.568px">Ricardopg</span>
<span class="t m" style="left:48.4px;top:62.4px;font-size:13.5px;color:#333;letter-spacing:-0.198px">Geometries</span>
<span class="t" style="left:51.0px;top:91.9px;font-size:13.5px;color:#333;letter-spacing:-0.126px">office</span>
<span class="t m" style="left:48.4px;top:121.7px;font-size:13.5px;color:#333;letter-spacing:-0.218px">Simulations</span>
<span class="t" style="left:51.4px;top:149.7px;font-size:13.5px;color:#333;letter-spacing:-0.323px">Convective heat transfer</span>
<span class="t" style="left:71.2px;top:174.7px;font-size:13.5px;color:#333;letter-spacing:-0.297px">Geometry</span>
<span class="t" style="left:71.2px;top:199.8px;font-size:13.5px;color:#333;letter-spacing:-0.220px">Model</span>
<span class="t" style="left:48.4px;top:224.7px;font-size:13.5px;color:#333;letter-spacing:-0.146px">Materials</span>
<span class="t" style="left:91.2px;top:249.8px;font-size:13.5px;color:#333;letter-spacing:-0.100px">Air</span>
<span class="t" style="left:71.5px;top:274.7px;font-size:13.5px;color:#333;letter-spacing:-0.151px">Initial conditions</span>
<span class="t" style="left:48.4px;top:299.7px;font-size:13.5px;color:#333;letter-spacing:-0.319px">Boundary conditions</span>
<span class="t" style="left:91.2px;top:324.7px;font-size:13.5px;color:#333;letter-spacing:0.017px">Inlet</span>
<span class="t" style="left:91.2px;top:349.7px;font-size:13.5px;color:#333;letter-spacing:0.154px">Outlet</span>
<span class="t" style="left:91.2px;top:374.8px;font-size:13.5px;color:#333;letter-spacing:-0.425px">Walls</span>
<span class="t" style="left:48.4px;top:399.7px;font-size:13.5px;color:#333;letter-spacing:-0.528px">Advanced concepts</span>
<span class="t" style="left:71.3px;top:424.7px;font-size:13.5px;color:#333;letter-spacing:-0.402px">Numerics</span>
<span class="t" style="left:71.3px;top:449.8px;font-size:13.5px;color:#333;letter-spacing:-0.230px">Simulation control</span>
<span class="t" style="left:48.4px;top:474.8px;font-size:13.5px;color:#333;letter-spacing:-0.281px">Result control</span>
<span class="t" style="left:71.3px;top:499.8px;font-size:13.5px;color:#333;letter-spacing:-0.605px">Mesh</span>
<span class="t" style="left:68.6px;top:524.8px;font-size:13.5px;color:#333;letter-spacing:-0.500px">Refinements</span>
<span class="t" style="left:68.6px;top:549.9px;font-size:13.5px;color:#333;letter-spacing:-0.651px">Meshing Log</span>
<span class="t" style="left:71.3px;top:574.9px;font-size:13.5px;color:#333;letter-spacing:-0.543px">Simulation Runs</span>
<span class="t m" style="left:10.5px;top:613.8px;font-size:15px;color:#333;letter-spacing:-0.208px">Job status</span>
<span class="t" style="left:54.2px;top:648.7px;font-size:13.5px;color:#333;letter-spacing:-0.656px">Mesh 1</span>
<span class="t" style="left:54.2px;top:664.8px;font-size:11px;color:#777;letter-spacing:-0.502px">Mesh</span>
<span class="t h" style="left:274.4px;top:69.8px;font-size:16px;color:#3d4752;letter-spacing:-0.404px">Walls</span>
<span class="t" style="left:274.4px;top:121.9px;font-size:13.5px;color:#333;letter-spacing:-0.308px">Boundary conditions</span>
<span class="t" style="left:274.4px;top:158.4px;font-size:13.5px;color:#333;letter-spacing:-0.330px">(U) Velocity</span>
<span class="t" style="left:274.4px;top:194.7px;font-size:13.5px;color:#333;letter-spacing:-0.352px">(T) Temperature</span>
<span class="t" style="left:274.4px;top:232.0px;font-size:13.5px;color:#333;letter-spacing:-0.352px">(T) Temperature</span>
<span class="t" style="left:467.0px;top:121.9px;font-size:13.5px;color:#3d4752;letter-spacing:-0.317px">Wall</span>
<span class="t" style="left:467.0px;top:158.4px;font-size:13.5px;color:#3d4752;letter-spacing:-0.253px">No-slip</span>
<span class="t" style="left:467.0px;top:194.7px;font-size:13.5px;color:#3d4752;letter-spacing:-0.575px">Fixed value</span>
<span class="t" style="left:549.7px;top:267.2px;font-size:14.5px;color:#3d4752;letter-spacing:-1.241px">20</span>
<span class="t" style="left:573.9px;top:267.0px;font-size:11.5px;color:#333;letter-spacing:0.094px">°C</span>
<span class="t m" style="left:274.4px;top:308.0px;font-size:13.5px;color:#333;letter-spacing:-0.512px">Assignment (445 Faces )</span>
<span class="t" style="left:274.4px;top:347.2px;font-size:13.5px;color:#333;letter-spacing:-0.425px">Walls</span>
<span class="t" style="left:804.4px;top:674.2px;font-size:12px;color:#333;letter-spacing:-0.143px">2 [m]</span>
<span class="t" style="left:1256.4px;top:596.0px;font-size:11px;color:#999;letter-spacing:-0.734px">RIGHT</span>
<span class="t" style="left:1238.8px;top:544.3px;font-size:12px;color:#9090f2;letter-spacing:0.000px">Z</span>
<span class="t" style="left:1317.7px;top:628.8px;font-size:12px;color:#f28080;letter-spacing:0.000px">X</span>
<span class="t" style="left:1246.0px;top:620.8px;font-size:11.5px;color:#c6ebc6;letter-spacing:0.000px">Y</span>
<span class="t m" style="left:1161.0px;top:62.4px;font-size:13.5px;color:#333;letter-spacing:-0.083px">Geometry</span>
<span class="t" style="left:1184.8px;top:91.7px;font-size:13.5px;color:#333;letter-spacing:-0.006px">office</span>
<span class="t" style="left:1224.8px;top:116.7px;font-size:13.5px;color:#333;letter-spacing:0.000px">1</span>
<span class="t m" style="left:1160.4px;top:154.7px;font-size:13.5px;color:#333;letter-spacing:-0.256px">Topological Entity Sets</span>
<span class="t" style="left:1204.6px;top:182.9px;font-size:13.5px;color:#333;letter-spacing:0.092px">Inlet</span>
<span class="t" style="left:1204.6px;top:207.7px;font-size:13.5px;color:#333;letter-spacing:0.274px">Outlet</span>
<span class="t" style="left:1204.6px;top:232.8px;font-size:13.5px;color:#29abe2;letter-spacing:-0.300px">Walls</span>
<span class="t m" style="left:1160.4px;top:262.7px;font-size:13.5px;color:#333;letter-spacing:-0.096px">Geometry primitives</span>
</div>
</body></html>
